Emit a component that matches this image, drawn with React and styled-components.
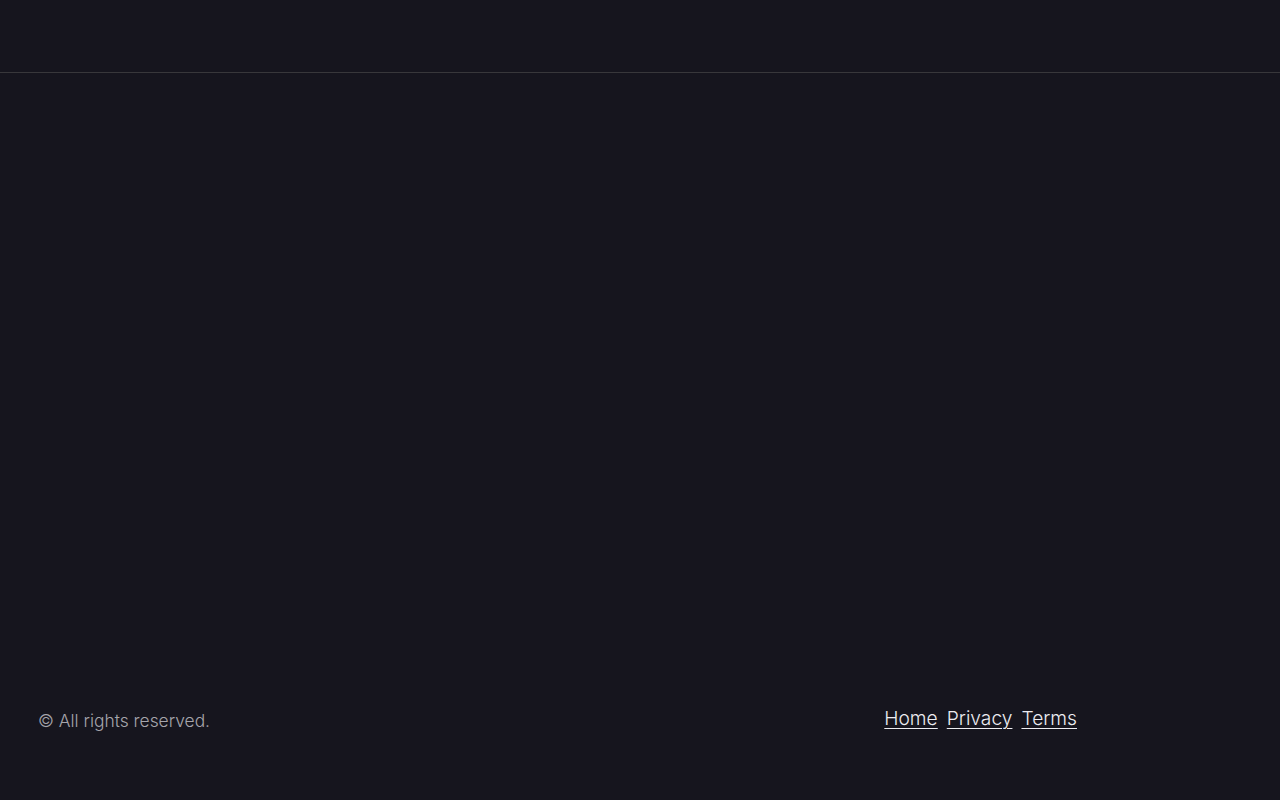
import React from "react";
import styled, { createGlobalStyle } from "styled-components";

const GlobalStyle = createGlobalStyle`
  html, body {
    margin: 0;
    padding: 0;
    background: #16151e;
  }
  body {
    font-family: Inter, "Noto Sans", sans-serif;
  }
`;

const Page = styled.div`
  min-height: 800px;
  display: flex;
  flex-direction: column;
  background: #16151e;
`;

const Header = styled.header`
  height: 73px;
  border-bottom: 1px solid #38373b;
  box-sizing: border-box;
`;

const Main = styled.main`
  flex: 1;
`;

const Footer = styled.footer`
  height: 96px;
  padding: 0 203px 0 38px;
  display: flex;
  justify-content: space-between;
  align-items: flex-start;
  box-sizing: border-box;
`;

const Copy = styled.p`
  margin: 0;
  padding-top: 5px;
  font-size: 17.4px;
  font-weight: 300;
  line-height: 24px;
  color: #a6a5ac;
`;

const Links = styled.nav`
  display: flex;
  gap: 9px;
  padding-top: 1px;
`;

const Link = styled.a`
  color: #ececf1;
  font-size: 19.2px;
  font-weight: 300;
  line-height: 26px;
  text-decoration: underline;
  text-underline-offset: 3px;
  text-decoration-thickness: 1px;
`;

export default function App() {
  return (
    <>
      <GlobalStyle />
      <Page>
        <Header />
        <Main />
        <Footer>
          <Copy>© All rights reserved.</Copy>
          <Links>
            <Link href="#">Home</Link>
            <Link href="#">Privacy</Link>
            <Link href="#">Terms</Link>
          </Links>
        </Footer>
      </Page>
    </>
  );
}
